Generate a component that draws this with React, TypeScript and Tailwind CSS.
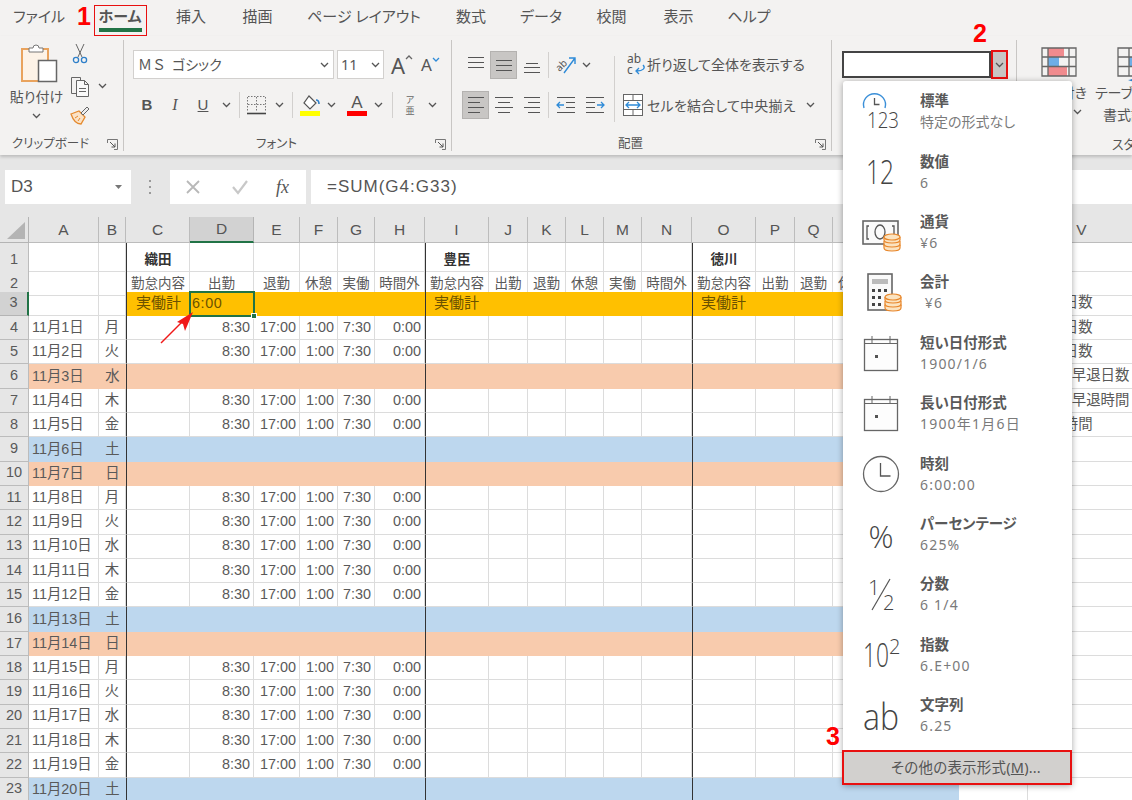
import type { ReactNode } from "react";

const UI = "font-['Noto_Sans','Noto_Sans_CJK_JP',sans-serif] [font-feature-settings:'palt']";
const CELL = "font-['Liberation_Sans','Noto_Sans_CJK_JP',sans-serif]";

const tabs = [
  ["ファイル", "w-[78px]"],
  ["ホーム", "w-[84px]"],
  ["挿入", "w-[58px]"],
  ["描画", "w-[75px]"],
  ["ページ レイアウト", "w-[138px]"],
  ["数式", "w-[76px]"],
  ["データ", "w-[64px]"],
  ["校閲", "w-[77px]"],
  ["表示", "w-[57px]"],
  ["ヘルプ", "w-[84px]"],
];

const columns = "ABCDEFGHIJKLMNOPQRSTUV".split("");
const colGrid =
  "grid grid-cols-[29px_70px_27px_64px_64px_46px_38px_37px_50px_64px_39px_38px_38px_38px_50px_64px_39px_38px_38px_38px_50px_69px_108px]";
const blockStart = ["C", "I", "O"];
const headings = ["勤怠内容", "出勤", "退勤", "休憩", "実働", "時間外"];
const week = ["月", "火", "水", "木", "金", "土", "日"];
const sideNotes: Record<number, [string, string]> = {
  3: ["出勤日数", "pl-[7px]"],
  4: ["欠勤日数", "pl-[7px]"],
  5: ["有休日数", "pl-[7px]"],
  6: ["遅刻早退日数", "pl-[15px]"],
  7: ["遅刻早退時間", "pl-[15px]"],
  8: ["残業時間", "pl-[7px]"],
};

function Chevron({ className = "" }: { className?: string }) {
  return (
    <svg width="9" height="6" viewBox="0 0 9 6" className={className}>
      <path d="M1 1l3.5 3.5L8 1" fill="none" stroke="#555" strokeWidth="1.3" />
    </svg>
  );
}

function Launcher() {
  return (
    <svg width="11" height="11" viewBox="0 0 11 11">
      <path d="M.5 4V.5h10v10H7" fill="none" stroke="#777" />
      <path d="M3 3l5 5M8 4.5V8H4.5" fill="none" stroke="#555" />
    </svg>
  );
}

function Group({
  width,
  label,
  launcher = true,
  children,
}: {
  width: string;
  label: string;
  launcher?: boolean;
  children: ReactNode;
}) {
  return (
    <div className={`flex h-full shrink-0 flex-col ${width}`}>
      <div className="h-[98px]">{children}</div>
      <div className="flex h-[22px] items-center text-[12.500px] text-[#555]">
        <span className="flex-1 text-center">{label}</span>
        <span className="flex w-[22px] justify-center">{launcher && <Launcher />}</span>
      </div>
    </div>
  );
}

function Sep({ className = "" }: { className?: string }) {
  return <div className={`my-[4px] w-px shrink-0 bg-[#c8c6c4] ${className}`} />;
}

function ToolSep() {
  return <div className="mx-auto h-[26px] w-px bg-[#d2d0ce]" />;
}

function Slot({ w, on, children }: { w: string; on?: boolean; children?: ReactNode }) {
  return (
    <div
      className={`flex h-[28px] shrink-0 items-center justify-center ${w} ${
        on ? "border border-[#b4b2b0] bg-[#c8c6c4]" : ""
      }`}
    >
      {children}
    </div>
  );
}

function Lines({ rows }: { rows: [number, number, number][] }) {
  return (
    <svg width="20" height="20" viewBox="0 0 20 20">
      {rows.map(([y, a, b]) => (
        <path key={y} d={`M${a} ${y + 0.5}H${b}`} stroke="#555" />
      ))}
    </svg>
  );
}

function PasteIcon() {
  return (
    <svg width="38" height="40" viewBox="0 0 38 40">
      <rect x="1" y="6" width="26" height="32" fill="#fdf3e7" stroke="#e9a35d" strokeWidth="2" />
      <path d="M8 9V5h4a3 3 0 0 1 6 0h4v4z" fill="#fff" stroke="#777" />
      <rect x="17.5" y="17.5" width="18" height="21" fill="#fff" stroke="#666" strokeWidth="1.5" />
    </svg>
  );
}

function CutIcon() {
  return (
    <svg width="16" height="21" viewBox="0 0 16 21">
      <path d="M4 1l6 13M12 1L6 14" stroke="#666" fill="none" />
      <circle cx="4" cy="17" r="2.6" fill="none" stroke="#2e7fc9" strokeWidth="1.3" />
      <circle cx="12" cy="17" r="2.6" fill="none" stroke="#2e7fc9" strokeWidth="1.3" />
    </svg>
  );
}

function CopyIcon() {
  return (
    <svg width="21" height="21" viewBox="0 0 21 21">
      <path d="M6.5 17.5h-5v-16h9v3" fill="none" stroke="#666" />
      <path d="M6.5 4.5h8l4 4v12h-12zM14.5 4.5v4h4M9 12.5h7M9 15.5h7" fill="#fafafa" stroke="#666" />
    </svg>
  );
}

function BrushIcon() {
  return (
    <svg width="21" height="20" viewBox="0 0 21 20">
      <path d="M1 9l8-3 6 6-4 7c-4 0-8-4-10-10z" fill="#fbe2c6" stroke="#e58a2e" strokeWidth="1.3" />
      <path d="M5 13l3-2M8 16l2-3" stroke="#e58a2e" />
      <path d="M11 8l6-6 2 2-6 6z" fill="#eee" stroke="#666" />
    </svg>
  );
}

function BorderIcon() {
  return (
    <svg width="19" height="19" viewBox="0 0 19 19">
      <path d="M.5 1V16M9.5 1V16M18.5 1V16M1 .5H18M1 8.5H18" stroke="#777" strokeDasharray="1.5 1.5" fill="none" />
      <path d="M0 17.5H19" stroke="#444" strokeWidth="1.6" />
    </svg>
  );
}

function FillIcon() {
  return (
    <svg width="21" height="21" viewBox="0 0 21 21">
      <path d="M9 1l7 7-6 6-6-6z" fill="#fff" stroke="#555" strokeWidth="1.2" />
      <path d="M16 5c2 0 3 2 3 4" fill="none" stroke="#2e7fc9" strokeWidth="1.6" />
      <rect x="0" y="16" width="20" height="5" fill="#ffff00" />
    </svg>
  );
}

function OrientIcon() {
  return (
    <svg width="24" height="24" viewBox="0 0 24 24">
      <text x="1" y="16" fontSize="10" fill="#555" transform="rotate(-45 7 12)">
        ab
      </text>
      <path d="M10 20L21 5M15 5h6v6" fill="none" stroke="#2e8bd8" strokeWidth="1.4" />
    </svg>
  );
}

function IndentIcon({ flip }: { flip?: boolean }) {
  return (
    <svg width="20" height="20" viewBox="0 0 20 20" className={flip ? "-scale-x-100" : ""}>
      <path d="M1 2.5h18M10 7.5h9M10 12.5h9M1 17.5h18" stroke="#555" />
      <path d="M8 10H1M4 7l-3 3 3 3" fill="none" stroke="#2e8bd8" strokeWidth="1.3" />
    </svg>
  );
}

function WrapIcon() {
  return (
    <svg width="20" height="26" viewBox="0 0 20 26">
      <text x="0" y="11" fontSize="12" fill="#555">
        ab
      </text>
      <text x="0" y="22" fontSize="12" fill="#555">
        c
      </text>
      <path d="M16 13c3 3 0 6-6 6M12 16l-3 3 3 3" fill="none" stroke="#2e8bd8" strokeWidth="1.3" />
    </svg>
  );
}

function MergeIcon() {
  return (
    <svg width="20" height="22" viewBox="0 0 20 22">
      <rect x=".5" y=".5" width="19" height="21" fill="#fff" stroke="#666" />
      <path d="M.5 6.5h19M.5 15.5h19M10 1v5M10 16v5" stroke="#666" />
      <path d="M3 11h14M6 8l-3 3 3 3M14 8l3 3-3 3" fill="none" stroke="#2e8bd8" strokeWidth="1.3" />
    </svg>
  );
}

function CondFormatIcon() {
  return (
    <svg width="36" height="30" viewBox="0 0 36 30">
      <rect x="7" y="1" width="16" height="9" fill="#f08b8e" />
      <rect x="7" y="10" width="11" height="9" fill="#6eaee6" />
      <rect x="7" y="19" width="19" height="10" fill="#f08b8e" />
      <path d="M1 1h34v28H1zM1 10h34M1 19.500h34M7 1v28M28 1v28" fill="none" stroke="#666" strokeWidth="1.3" />
    </svg>
  );
}

function TableIcon() {
  return (
    <svg width="36" height="36" viewBox="0 0 36 36">
      <rect x="12" y="10" width="10" height="10" fill="#6eaee6" />
      <path d="M1 1h34v28H1zM1 10h34M1 19.500h34M12 1v28M23 1v28" fill="none" stroke="#666" strokeWidth="1.3" />
      <path d="M11 33c4 0 10-3 12-12l2 8c-2 4-8 7-14 4z" fill="#2e7fc9" />
    </svg>
  );
}

function FontSizeA({ up }: { up?: boolean }) {
  return (
    <span className="flex items-start">
      <span className={`${up ? "text-[22px]" : "text-[17px]"} leading-none text-[#555]`}>A</span>
      <svg width="8" height="5" viewBox="0 0 8 5" className="mt-[1px]">
        <path d={up ? "M1 4l3-3 3 3" : "M1 1l3 3 3-3"} fill="none" stroke={up ? "#666" : "#2e8bd8"} strokeWidth="1.3" />
      </svg>
    </span>
  );
}

const iconText = { fontFamily: "'Open Sans', sans-serif", fontWeight: 300, fill: "#444" };

function Coins() {
  return (
    <g fill="#fbe3c0" stroke="#e8872b" strokeWidth="1.2">
      <ellipse cx="0" cy="12" rx="8" ry="3" />
      <path d="M-8 12v3c0 4 16 4 16 0v-3" />
      <path d="M-8 8v3c0 4 16 4 16 0V8" />
      <path d="M-8 4v3c0 4 16 4 16 0V4" />
      <ellipse cx="0" cy="4" rx="8" ry="3" />
    </g>
  );
}

function CalendarIcon() {
  return (
    <svg width="46" height="46" viewBox="0 0 46 46">
      <rect x="6.500" y="9.500" width="33" height="31" fill="#fdfdfd" stroke="#666" strokeWidth="1.3" />
      <path d="M6.500 13.500h33M14 6v7M32 6v7" stroke="#666" fill="none" />
      <rect x="17" y="25" width="3" height="3" fill="#555" />
    </svg>
  );
}

const menuIcons: ReactNode[] = [
  <svg width="46" height="46" viewBox="0 0 46 46">
    <path d="M6 20A11 11 0 1 1 27 20" fill="none" stroke="#3a8fd8" strokeWidth="1.4" />
    <path d="M16.500 10v6.500h5" fill="none" stroke="#555" strokeWidth="1.3" />
    <text x="9" y="40" fontSize="22" textLength="32" lengthAdjust="spacingAndGlyphs" style={iconText}>123</text>
  </svg>,
  <svg width="46" height="46" viewBox="0 0 46 46">
    <text x="8" y="35" fontSize="33" textLength="28" lengthAdjust="spacingAndGlyphs" style={iconText}>12</text>
  </svg>,
  <svg width="46" height="46" viewBox="0 0 46 46">
    <rect x="5" y="12" width="35" height="23" fill="#fafafa" stroke="#666" strokeWidth="1.6" />
    <path d="M11 17H9v13h2M34 17h2v13h-2" fill="none" stroke="#555" strokeWidth="1.3" />
    <ellipse cx="22" cy="23" rx="5" ry="7" fill="none" stroke="#555" strokeWidth="1.3" />
    <g transform="translate(34 24)"><Coins /></g>
  </svg>,
  <svg width="46" height="46" viewBox="0 0 46 46">
    <rect x="10" y="5" width="24" height="36" fill="#fafafa" stroke="#666" strokeWidth="1.6" />
    <rect x="14" y="10" width="16" height="5" fill="#bbb" />
    <path d="M14 20h3v3h-3zM20 20h3v3h-3zM26 20h3v3h-3zM14 27h3v3h-3zM20 27h3v3h-3zM14 34h3v3h-3zM20 34h3v3h-3z" fill="#444" />
    <g transform="translate(35 24)"><Coins /></g>
  </svg>,
  <CalendarIcon />,
  <CalendarIcon />,
  <svg width="46" height="46" viewBox="0 0 46 46">
    <circle cx="23" cy="23" r="17.500" fill="#fff" stroke="#666" strokeWidth="1.3" />
    <path d="M22.500 12v13h10" fill="none" stroke="#555" strokeWidth="1.3" />
  </svg>,
  <svg width="46" height="46" viewBox="0 0 46 46">
    <text x="23" y="37" fontSize="31" textAnchor="middle" style={iconText}>%</text>
  </svg>,
  <svg width="46" height="46" viewBox="0 0 46 46">
    <text x="10" y="24" fontSize="21" style={iconText}>1</text>
    <path d="M32 8L14 39" stroke="#555" strokeWidth="1.2" />
    <text x="25" y="39" fontSize="20" style={iconText}>2</text>
  </svg>,
  <svg width="46" height="46" viewBox="0 0 46 46">
    <text x="5" y="35" fontSize="33" textLength="26" lengthAdjust="spacingAndGlyphs" style={iconText}>10</text>
    <text x="31" y="22" fontSize="20" style={iconText}>2</text>
  </svg>,
  <svg width="46" height="46" viewBox="0 0 46 46">
    <text x="5" y="38" fontSize="37" textLength="36" lengthAdjust="spacingAndGlyphs" style={iconText}>ab</text>
  </svg>,
];

const formats = [
  ["標準", "特定の形式なし"],
  ["数値", "6"],
  ["通貨", "¥6"],
  ["会計", "\u00a0¥6"],
  ["短い日付形式", "1900/1/6"],
  ["長い日付形式", "1900年1月6日"],
  ["時刻", "6:00:00"],
  ["パーセンテージ", "625%"],
  ["分数", "6 1/4"],
  ["指数", "6.E+00"],
  ["文字列", "6.25"],
];

function FormatMenu() {
  return (
    <div className={`absolute left-[843px] top-[81px] z-20 flex h-[704px] w-[229px] flex-col rounded-t-[3px] bg-white shadow-[0_1px_6px_rgba(0,0,0,0.35)] ${UI}`}>
      {formats.map(([title, sample], i) => (
        <div key={title} className="flex h-[60.4px] shrink-0 items-center">
          <div className="ml-[15px] h-[46px] w-[46px] shrink-0">{menuIcons[i]}</div>
          <div className="ml-[16px] flex flex-col">
            <span className="text-[14.500px] leading-[21px] font-bold text-[#595959]">{title}</span>
            <span className={`text-[14px] leading-[21px] text-[#7a7a7a] ${i === 0 ? "" : "tracking-[1.2px]"}`}>{sample}</span>
          </div>
        </div>
      ))}
      <div className="mt-auto -ml-px flex h-[35px] items-center justify-center border-2 border-[#e81010] bg-[#d2d0ce] pl-[18px] text-[14.500px] tracking-[0.2px] text-[#555]">
        その他の表示形式(<span className="underline">M</span>)...
      </div>
    </div>
  );
}

function Ribbon() {
  return (
    <div className={`relative z-10 flex h-[119px] overflow-hidden bg-[#f3f2f1] shadow-[0_2px_3px_rgba(0,0,0,0.18)] ${UI}`}>
      <Group width="w-[123px]" label="クリップボード">
        <div className="flex">
          <div className="flex w-[70px] flex-col items-center pl-[9px] pt-[7px]">
            <PasteIcon />
            <span className="mt-[3px] -ml-[6px] text-[14px] leading-[22px] text-[#555]">貼り付け</span>
            <Chevron className="mt-[5px] -ml-[6px]" />
          </div>
          <div className="flex flex-col items-start pt-[7px]">
            <div className="ml-[2px] h-[24px]"><CutIcon /></div>
            <div className="mt-[7px] flex h-[24px] items-center">
              <CopyIcon />
              <Chevron className="ml-[7px]" />
            </div>
            <div className="mt-[7px]"><BrushIcon /></div>
          </div>
        </div>
      </Group>
      <Sep />
      <Group width="w-[327px]" label="フォント">
        <div className="pl-[9px] pt-[14px]">
          <div className="flex h-[29px] items-center">
            <div className="flex h-[29px] w-[201px] items-center justify-between border border-[#d2d0ce] bg-white px-[4px] text-[14px] text-[#555]">
              <span className="whitespace-nowrap">
                <span className="[font-feature-settings:normal]">ＭＳ</span>
                <span className="ml-[6px]">ゴシック</span>
              </span>
              <Chevron />
            </div>
            <div className="ml-[3px] flex h-[29px] w-[47px] items-center justify-between border border-[#d2d0ce] bg-white px-[3px] text-[14.500px] text-[#555]">
              11
              <Chevron />
            </div>
            <div className="ml-[7px] w-[30px]"><FontSizeA up /></div>
            <div className="w-[20px]"><FontSizeA /></div>
          </div>
          <div className="mt-[12px] flex h-[28px] items-center text-[#555]">
            <Slot w="w-[28px]"><span className="font-['Liberation_Sans'] text-[15px] font-bold">B</span></Slot>
            <Slot w="w-[28px]"><span className="font-['Liberation_Serif'] text-[16px] italic">I</span></Slot>
            <Slot w="w-[28px]"><span className="font-['Liberation_Sans'] text-[15px] underline">U</span></Slot>
            <Slot w="w-[18px]"><Chevron /></Slot>
            <Slot w="w-[8px]"><ToolSep /></Slot>
            <Slot w="w-[27px]"><BorderIcon /></Slot>
            <Slot w="w-[18px]"><Chevron /></Slot>
            <Slot w="w-[8px]"><ToolSep /></Slot>
            <Slot w="w-[28px]"><FillIcon /></Slot>
            <Slot w="w-[14px]"><Chevron /></Slot>
            <div className="w-[5px]" />
            <Slot w="w-[28px]">
              <div className="flex flex-col items-center">
                <span className="font-['Liberation_Sans'] text-[17px] leading-[17px]">A</span>
                <span className="h-[5px] w-[20px] bg-[#ff0000]" />
              </div>
            </Slot>
            <Slot w="w-[14px]"><Chevron /></Slot>
            <Slot w="w-[14px]"><ToolSep /></Slot>
            <Slot w="w-[22px]">
              <div className="flex flex-col items-center text-[9px] leading-[11px] text-[#666]">
                <span>ア</span>
                <span>亜</span>
              </div>
            </Slot>
            <Slot w="w-[22px]"><Chevron /></Slot>
          </div>
        </div>
      </Group>
      <Sep />
      <Group width="w-[379px]" label="配置">
        <div className="flex pt-[14px]">
          <div className="w-[162px] pl-[10px]">
            <div className="flex h-[29px] items-center">
              <Slot w="w-[27px]"><Lines rows={[[2, 2, 18], [7, 2, 18], [12, 2, 18]]} /></Slot>
              <div className="w-px" />
              <Slot w="w-[27px]" on><Lines rows={[[5, 2, 18], [10, 2, 18], [15, 2, 18]]} /></Slot>
              <div className="w-px" />
              <Slot w="w-[27px]"><Lines rows={[[8, 4, 16], [12, 2, 18], [17, 2, 18]]} /></Slot>
              <Slot w="w-[7px]"><ToolSep /></Slot>
              <Slot w="w-[28px]"><OrientIcon /></Slot>
              <Slot w="w-[12px]"><Chevron /></Slot>
            </div>
            <div className="mt-[12px] flex h-[28px] items-center">
              <Slot w="w-[27px]" on><Lines rows={[[2, 2, 18], [7, 2, 14], [12, 2, 18], [17, 2, 14]]} /></Slot>
              <div className="w-px" />
              <Slot w="w-[27px]"><Lines rows={[[2, 1, 19], [7, 4, 16], [12, 1, 19], [17, 4, 16]]} /></Slot>
              <div className="w-px" />
              <Slot w="w-[27px]"><Lines rows={[[2, 2, 18], [7, 6, 18], [12, 2, 18], [17, 6, 18]]} /></Slot>
              <Slot w="w-[7px]"><ToolSep /></Slot>
              <Slot w="w-[28px]"><IndentIcon /></Slot>
              <Slot w="w-[29px]"><IndentIcon flip /></Slot>
            </div>
          </div>
          <div className="mt-[6px] h-[66px] w-px bg-[#d2d0ce]" />
          <div className="flex-1 pl-[8px] text-[14px] text-[#555]">
            <div className="flex h-[29px] items-center">
              <div className="w-[24px] pl-[4px]"><WrapIcon /></div>
              <span>折り返して全体を表示する</span>
            </div>
            <div className="mt-[12px] flex h-[28px] items-center">
              <div className="w-[24px]"><MergeIcon /></div>
              <span className="tracking-[0.2px]">セルを結合して中央揃え</span>
              <Chevron className="ml-[10px]" />
            </div>
          </div>
        </div>
      </Group>
      <Sep />
      <Group width="w-[184px]" label="" launcher={false}>
        <div className="flex pl-[10px] pt-[15px]">
          <div className="h-[27px] w-[149px] border-2 border-[#444] bg-white" />
          <div className="-mt-px flex h-[29px] w-[17px] items-center justify-center border-2 border-[#e81010] bg-[#c8c6c4]">
            <Chevron />
          </div>
        </div>
      </Group>
      <Sep />
      <div className="flex flex-col">
        <div className="flex h-[98px] text-[14px] leading-[22px] text-[#555]">
          <div className="flex w-[70px] flex-col items-end pt-[11px]">
            <div className="pr-[10px]"><CondFormatIcon /></div>
            <span className="mt-[5px] whitespace-nowrap">条件付き</span>
            <Chevron className="mt-[5px] mr-[5px]" />
          </div>
          <div className="ml-[8px] flex w-[60px] flex-col pt-[11px]">
            <div className="ml-[22px]"><TableIcon /></div>
            <span className="-mt-[1px] whitespace-nowrap">テーブルとして</span>
            <span className="whitespace-nowrap pl-[8px]">書式設定</span>
          </div>
        </div>
        <div className="flex h-[21px] items-center pl-[95px] text-[13px] whitespace-nowrap text-[#555]">スタイル</div>
      </div>
    </div>
  );
}

function FormulaBar() {
  return (
    <div className="flex h-[34px] items-stretch bg-[#e6e6e6] pl-[5px]">
      <div className={`flex w-[126px] items-center justify-between bg-white pl-[6px] pr-[9px] text-[17px] text-[#555] ${CELL}`}>
        D3
        <svg width="7" height="4" viewBox="0 0 7 4"><path d="M0 0h7L3.500 4z" fill="#777" /></svg>
      </div>
      <div className="flex w-[39px] items-center justify-center">
        <svg width="3" height="14" viewBox="0 0 3 14">
          <path d="M0 0h2v2H0zM0 6h2v2H0zM0 12h2v2H0z" fill="#999" />
        </svg>
      </div>
      <div className="flex w-[136px] items-center bg-white">
        <svg width="16" height="16" viewBox="0 0 16 16" className="ml-[15px]">
          <path d="M2 2l12 12M14 2L2 14" stroke="#b8b8b8" strokeWidth="1.8" />
        </svg>
        <svg width="18" height="16" viewBox="0 0 18 16" className="ml-[30px]">
          <path d="M2 8l5 6L16 2" fill="none" stroke="#c8c8c8" strokeWidth="2.200" />
        </svg>
        <span className="ml-[27px] font-['Liberation_Serif'] text-[18px] text-[#555] italic">fx</span>
      </div>
      <div className={`ml-[5px] flex flex-1 items-center bg-white pl-[16px] text-[17px] tracking-[1px] text-[#555] ${CELL}`}>
        =SUM(G4:G33)
      </div>
    </div>
  );
}

function ColumnHeader() {
  return (
    <div className={`${colGrid} h-[26px] ${CELL} text-[15.500px] text-[#555]`}>
      <div className="flex items-end justify-end border-r border-b border-[#b4b4b4] bg-[#e6e6e6] pb-[3px] pr-[3px]">
        <svg width="18" height="17" viewBox="0 0 18 17"><path d="M18 0v17H0z" fill="#b4b4b4" /></svg>
      </div>
      {columns.map((c) => (
        <div
          key={c}
          className={`flex items-center justify-center border-r border-b ${
            c === "D"
              ? "border-r-[#b4b4b4] border-b-2 border-b-[#217346] bg-[#d2d2d2]"
              : "border-[#bcbcbc] bg-[#e6e6e6]"
          }`}
        >
          {c}
        </div>
      ))}
    </div>
  );
}

function Row({ n }: { n: number }) {
  const day = n - 3;
  const dow = day > 0 ? week[(day - 1) % 7] : "";
  const band =
    n === 3
      ? "gold"
      : day === 3 || dow === "日"
        ? "orange"
        : dow === "土"
          ? "blue"
          : "";
  const fill = band === "orange" ? "bg-[#f8cbad]" : band === "blue" ? "bg-[#bdd7ee]" : "";
  const work = day > 0 && !band;
  const times = ["8:30", "17:00", "1:00", "7:30", "0:00"];
  const note = sideNotes[n];
  // the two title rows sit low in their cells
  const low = n <= 2 ? "pt-[6px]" : "";

  return (
    <div className={`${colGrid} h-[24.300px] ${CELL} text-[14.400px] text-[#595959]`}>
      <div
        className={`flex items-center justify-center border-r border-b text-[14.500px] ${low} ${
          n === 3 ? "border-r-2 border-b-[#b4b4b4] border-r-[#217346] bg-[#d2d2d2]" : "border-[#bcbcbc] bg-[#e6e6e6]"
        }`}
      >
        {n}
      </div>
      {columns.map((c, i) => {
        const tinted = i <= 19 && fill !== "";
        const gold = band === "gold" && i >= 2 && i <= 19;
        const block = blockStart.includes(c);
        let text: ReactNode = null;
        let align = "justify-center";

        if (c === "A" && day > 0) {
          text = `11月${day}日`;
          align = "justify-start pl-[3px]";
        }
        if (c === "B") text = dow;
        if (i >= 2 && i <= 19) {
          const seg = i < 8 ? i - 2 : i < 14 ? i - 8 : i - 14;
          if (n === 1 && block) text = <span className="text-[13.500px] font-bold text-[#333]">{c === "C" ? "織田" : c === "I" ? "豊臣" : "徳川"}</span>;
          if (n === 2) text = <span className="text-[13.500px]">{headings[seg]}</span>;
          if (n === 3 && block) {
            text = <span className="text-[15px] text-[#6b5200]">実働計</span>;
            align = c === "C" ? "justify-center" : "justify-start pl-[8px]";
          }
          if (work && c >= "D" && c <= "H") {
            text = times[columns.indexOf(c) - 3];
            align = "justify-end pr-[3px]";
          }
        }
        if (n === 3 && c === "D") {
          return (
            <div key={c} className="relative z-[5] flex items-center bg-[#ffc000] pl-[2px] text-[#6b5200] outline-2 -outline-offset-1 outline-[#217346]">
              <span className="tracking-[0.6px]">6:00</span>
              <span className="absolute -right-[3px] -bottom-[3px] h-[6px] w-[6px] border border-white bg-[#217346]" />
            </div>
          );
        }
        if (c === "V" && note) {
          align = `justify-start ${note[1]}`;
          text = note[0];
        }
        return (
          <div
            key={c}
            className={`flex items-center whitespace-nowrap ${low} ${align} ${
              gold ? "bg-[#ffc000]" : tinted ? fill : ""
            } ${gold || tinted ? "" : "border-r border-b border-[#dcdcdc]"} ${
              block ? "border-l border-l-[#333]" : ""
            }`}
          >
            {text}
          </div>
        );
      })}
    </div>
  );
}

export default function App() {
  const rows = Array.from({ length: 23 }, (_, i) => i + 1);
  return (
    <div className="relative h-[800px] w-[1132px] overflow-hidden bg-[#e6e6e6]">
      <div className={`flex h-[36px] items-start bg-[#f3f2f1] text-[15px] text-[#555] ${UI}`}>
        {tabs.map(([name, w]) => (
          <div key={name} className={`flex h-[32px] flex-col items-center pt-[5px] ${w}`}>
            <span className={`leading-[22px] ${name === "ホーム" ? "font-bold" : ""}`}>{name}</span>
            {name === "ホーム" && <span className="mt-px h-[4px] w-[43px] bg-[#217346]" />}
          </div>
        ))}
      </div>
      <Ribbon />
      <div className="h-[15px]" />
      <FormulaBar />
      <div className="h-[13px]" />
      <ColumnHeader />
      <div className="bg-white">
        {rows.map((n) => (
          <Row key={n} n={n} />
        ))}
      </div>

      <FormatMenu />

      {/* annotations */}
      <div className="absolute left-[94px] top-[5px] z-30 h-[31px] w-[53px] border-[1.500px] border-[#e81010]" />
      <div className="absolute left-[77px] top-[4px] z-30 font-['Liberation_Sans'] text-[25px] leading-[25px] font-bold text-[#ff0000]">1</div>
      <div className="absolute left-[973px] top-[21px] z-30 font-['Liberation_Sans'] text-[25px] leading-[25px] font-bold text-[#ff0000]">2</div>
      <div className="absolute left-[826px] top-[724px] z-30 font-['Liberation_Sans'] text-[25px] leading-[25px] font-bold text-[#ff0000]">3</div>
      <svg width="40" height="40" viewBox="0 0 40 40" className="absolute left-[157px] top-[308px] z-30">
        <path d="M4 35L28 11" stroke="#f01818" strokeWidth="1.5" />
        <path d="M36 4L20 14l6 2 2 7z" fill="#f01818" />
      </svg>
    </div>
  );
}
